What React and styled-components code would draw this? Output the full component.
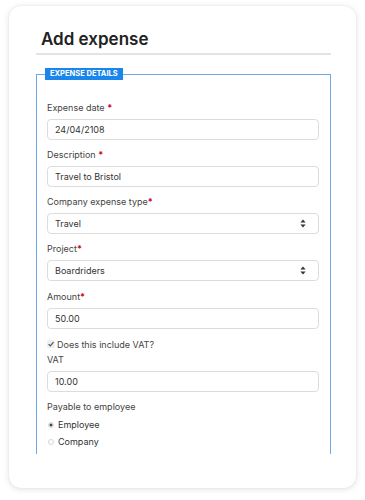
import styled, { createGlobalStyle } from "styled-components";

const GlobalStyle = createGlobalStyle`
  body {
    margin: 0;
    background: #ffffff;
    font-family: Inter, "Noto Sans", sans-serif;
    color: #333;
  }
`;

const SortArrows = () => (
  <svg width="6" height="9" viewBox="0 0 6 9">
    <path d="M3 0.5 L5.6 3.6 H0.4 Z" fill="#333" />
    <path d="M3 8.5 L5.6 5.4 H0.4 Z" fill="#333" />
  </svg>
);

const Star = () => <Req>*</Req>;

const App = () => {
  return (
    <Page>
      <GlobalStyle />
      <Card>
        <Title>Add expense</Title>
        <Fieldset>
          <Legend>Expense details</Legend>

          <Field>
            <Label>
              Expense date <Star />
            </Label>
            <Input>24/04/2108</Input>
          </Field>

          <Field>
            <Label>
              Description <Star />
            </Label>
            <Input>Travel to Bristol</Input>
          </Field>

          <Field>
            <Label>
              Company expense type<Star />
            </Label>
            <Input>
              Travel
              <SortArrows />
            </Input>
          </Field>

          <Field $gap={9}>
            <Label>
              Project<Star />
            </Label>
            <Input>
              Boardriders
              <SortArrows />
            </Input>
          </Field>

          <Field $gap={8}>
            <Label>
              Amount<Star />
            </Label>
            <Input>50.00</Input>
          </Field>

          <CheckRow>
            <Tick viewBox="0 0 8 8">
              <path d="M1.6 4.2 L3.3 5.9 L6.5 2.2" />
            </Tick>
            Does this include VAT?
          </CheckRow>

          <Field>
            <Label>VAT</Label>
            <Input>10.00</Input>
          </Field>

          <Label>Payable to employee</Label>
          <Radios>
            <RadioRow>
              <Radio $on />
              Employee
            </RadioRow>
            <RadioRow>
              <Radio />
              Company
            </RadioRow>
          </Radios>
        </Fieldset>
      </Card>
    </Page>
  );
};

const Page = styled.div`
  padding: 6px 9px 13px 9px;
`;

const Card = styled.div`
  width: 347px;
  box-sizing: border-box;
  background: #fff;
  border-radius: 12px;
  box-shadow: 0 1px 6px rgba(0, 0, 0, 0.13), 0 0 1px rgba(0, 0, 0, 0.12);
  padding: 21px 25px 34px 27px;
`;

const Title = styled.h1`
  margin: 0;
  padding: 0 0 2px 5px;
  font-size: 17px;
  line-height: 24px;
  font-weight: 600;
  color: #222;
  border-bottom: 2px solid #e4e4e4;
`;

const Fieldset = styled.fieldset`
  margin: 13px 0 0 0;
  padding: 21px 11px 4px 10px;
  border: 1px solid #6ea9e6;
  border-bottom: none;
  min-width: 0;
`;

const Legend = styled.legend`
  margin-left: -2px;
  padding: 0 5px;
  height: 12px;
  line-height: 12px;
  background: #1a86ec;
  color: #fff;
  font-size: 7.5px;
  font-weight: 700;
  text-transform: uppercase;
`;

const Field = styled.div`
  display: flex;
  flex-direction: column;
  gap: 4px;
  margin-bottom: ${(p) => p.$gap ?? 8}px;
`;

const Label = styled.div`
  font-size: 9px;
  line-height: 14px;
  color: #444;
`;

const Req = styled.span`
  color: #d0021b;
  font-weight: 700;
`;

const Input = styled.div`
  height: 21px;
  box-sizing: border-box;
  border: 1px solid #dcdcdc;
  border-radius: 4px;
  padding: 0 12px 0 7px;
  display: flex;
  align-items: center;
  justify-content: space-between;
  font-size: 9px;
  color: #333;
  background: #fff;
`;

const CheckRow = styled.div`
  display: flex;
  align-items: center;
  gap: 2px;
  height: 14px;
  margin-bottom: 2px;
  font-size: 9px;
  color: #444;
`;

const Tick = styled.svg`
  width: 8px;
  height: 8px;
  background: #eee;
  border-radius: 1.5px;
  fill: none;
  stroke: #555;
  stroke-width: 1.2;
`;

const Radios = styled.div`
  display: flex;
  flex-direction: column;
  margin-top: 2px;
`;

const RadioRow = styled.div`
  display: flex;
  align-items: center;
  gap: 4px;
  height: 17px;
  font-size: 9px;
  color: #333;
`;

const Radio = styled.span`
  width: 6px;
  height: 6px;
  box-sizing: border-box;
  border-radius: 50%;
  border: 1px solid #d6d6d6;
  background: ${(p) => (p.$on ? "radial-gradient(circle, #444 0 1.3px, #f2f2f2 1.7px)" : "#fff")};
  margin-left: 1px;
`;

export default App;
